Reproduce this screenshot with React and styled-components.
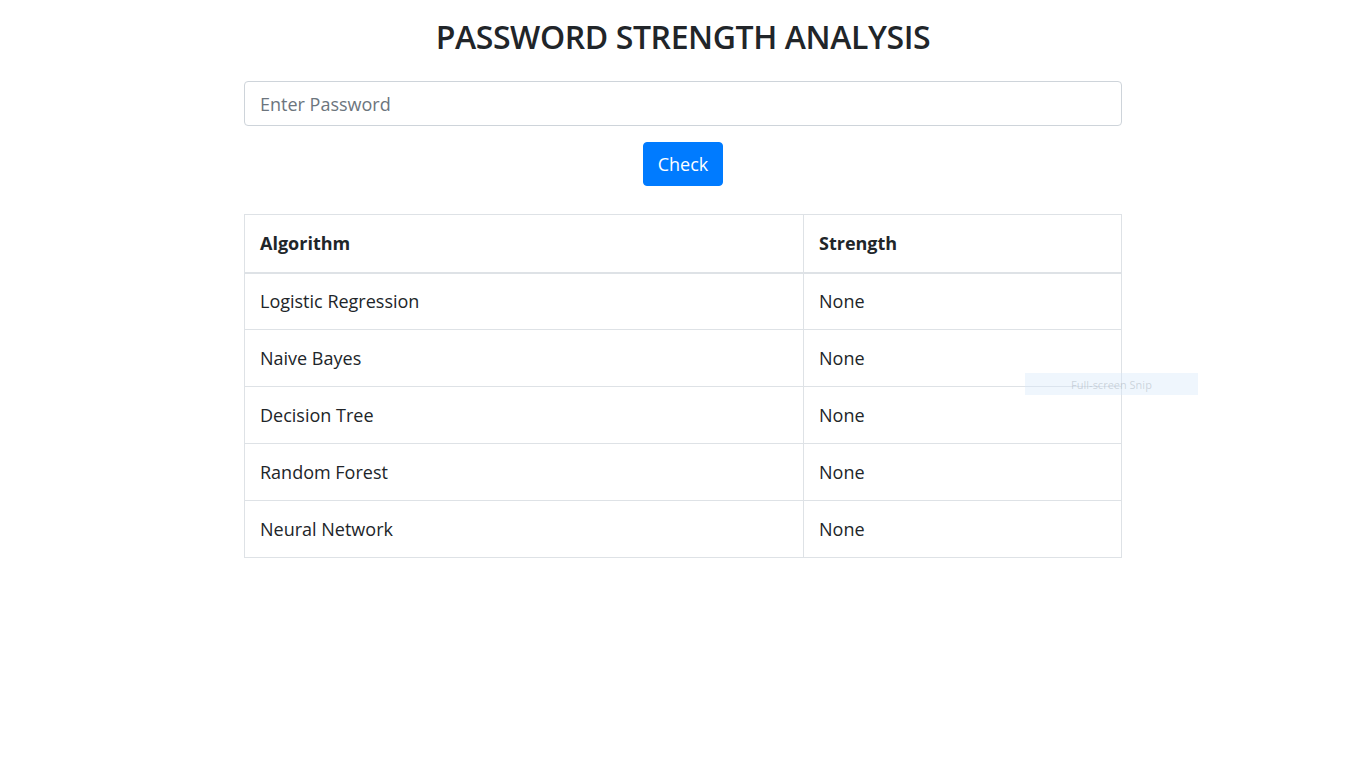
import React, { useState } from 'react'
import styled, { createGlobalStyle } from 'styled-components'

const GlobalStyle = createGlobalStyle`
  html, body {
    margin: 0;
    padding: 0;
    background: #fff;
  }
  body {
    font-family: "Open Sans", "Noto Sans", "Liberation Sans", sans-serif;
    color: #212529;
  }
`

const algorithms = [
  'Logistic Regression',
  'Naive Bayes',
  'Decision Tree',
  'Random Forest',
  'Neural Network',
]

const App = () => {
  const [password, setPassword] = useState('')

  return (
    <Page>
      <GlobalStyle />
      <Container>
        <Title>PASSWORD STRENGTH ANALYSIS</Title>
        <PasswordInput
          type="password"
          placeholder="Enter Password"
          value={password}
          onChange={(e) => setPassword(e.target.value)}
        />
        <ButtonRow>
          <CheckButton>Check</CheckButton>
        </ButtonRow>
        <ResultTable>
          <thead>
            <tr>
              <HeadCell $wide>Algorithm</HeadCell>
              <HeadCell>Strength</HeadCell>
            </tr>
          </thead>
          <tbody>
            {algorithms.map((name) => (
              <tr key={name}>
                <Cell>{name}</Cell>
                <Cell>None</Cell>
              </tr>
            ))}
          </tbody>
        </ResultTable>
      </Container>
      <SnipHint>Full-screen Snip</SnipHint>
    </Page>
  )
}

const Page = styled.div`
  position: relative;
  min-height: 768px;
`

const Container = styled.div`
  width: 878px;
  margin: 0 auto;
  padding-top: 13px;
  display: flex;
  flex-direction: column;
`

const Title = styled.h1`
  margin: 0 0 20px;
  text-align: center;
  font-size: 32px;
  font-weight: 600;
  line-height: 48px;
  letter-spacing: -0.4px;
  color: #212529;
`

const PasswordInput = styled.input`
  box-sizing: border-box;
  width: 100%;
  height: 45px;
  padding: 0 15px;
  font-family: inherit;
  font-size: 18px;
  color: #495057;
  background: #fff;
  border: 1px solid #ced4da;
  border-radius: 4px;
  outline: none;

  &::placeholder {
    color: #6c757d;
  }
`

const ButtonRow = styled.div`
  display: flex;
  justify-content: center;
  margin: 16px 0 28px;
`

const CheckButton = styled.button`
  width: 80px;
  height: 44px;
  padding: 0;
  font-family: inherit;
  font-size: 18px;
  color: #fff;
  background: #007bff;
  border: 1px solid #007bff;
  border-radius: 4px;
  cursor: pointer;
`

const ResultTable = styled.table`
  width: 100%;
  border-collapse: collapse;
  font-size: 18px;
  color: #212529;
  border: 1px solid #dee2e6;
`

const HeadCell = styled.th`
  box-sizing: border-box;
  width: ${(p) => (p.$wide ? '559px' : 'auto')};
  height: 58px;
  padding: 0 15px;
  text-align: left;
  font-weight: 700;
  border: 1px solid #dee2e6;
  border-bottom: 2px solid #dee2e6;
`

const Cell = styled.td`
  box-sizing: border-box;
  height: 57px;
  padding: 0 15px;
  border: 1px solid #dee2e6;
`

const SnipHint = styled.div`
  position: absolute;
  left: 1025px;
  top: 373px;
  width: 173px;
  height: 22px;
  display: flex;
  align-items: center;
  justify-content: center;
  font-size: 11px;
  color: rgba(160, 170, 180, 0.45);
  background: rgba(215, 232, 250, 0.4);
`

export default App
